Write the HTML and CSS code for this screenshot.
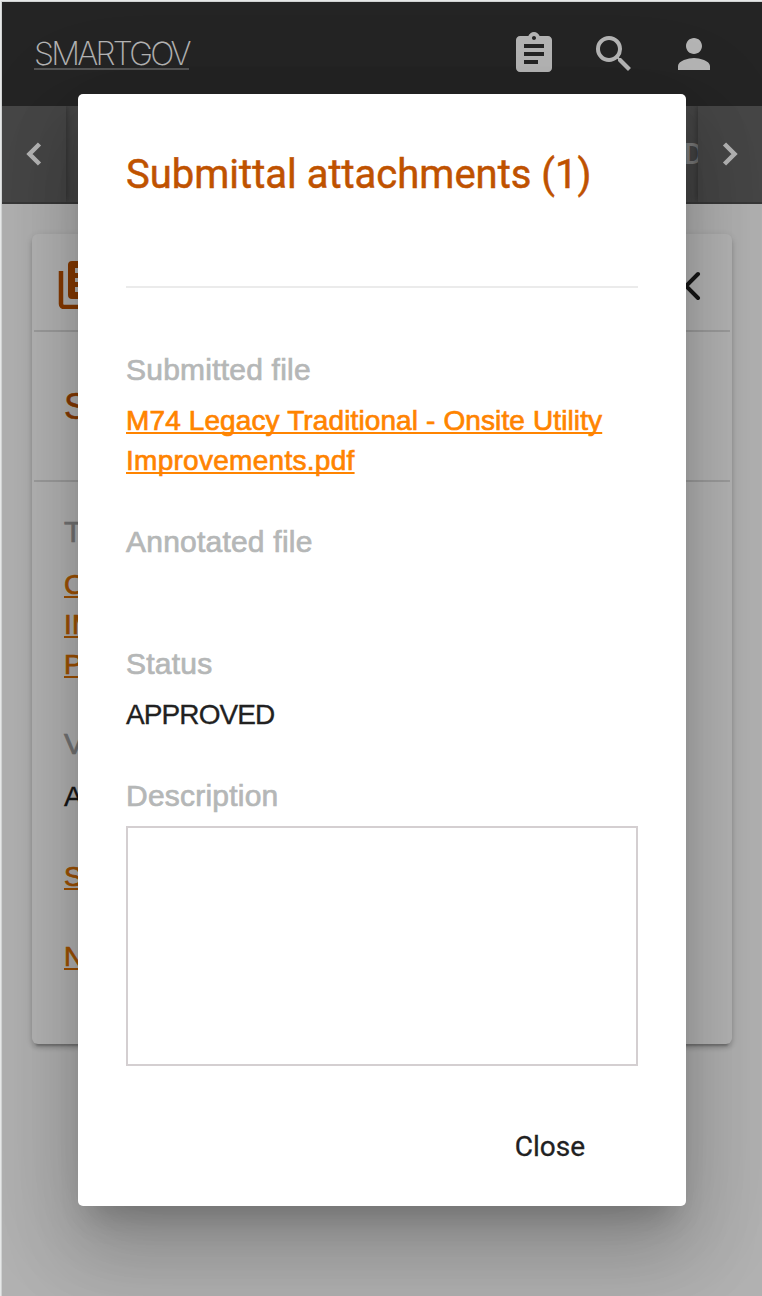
FILE: index.html
```html
<!DOCTYPE html>
<html lang="en">
<head>
<meta charset="utf-8">
<title>SmartGov</title>
<link rel="stylesheet" href="styles.css">
</head>
<body>
<div class="frame">
  <div class="page">
    <header class="topbar">
      <a class="brand">SMARTGOV</a>
      <div class="actions">
        <svg class="icon" viewBox="0 0 24 24"><path d="M19 3h-4.18C14.4 1.84 13.3 1 12 1s-2.4.84-2.82 2H5c-1.1 0-2 .9-2 2v14c0 1.1.9 2 2 2h14c1.1 0 2-.9 2-2V5c0-1.1-.9-2-2-2zm-7 0c.55 0 1 .45 1 1s-.45 1-1 1-1-.45-1-1 .45-1 1-1zm2 14H7v-2h7v2zm3-4H7v-2h10v2zm0-4H7V7h10v2z"/></svg>
        <svg class="icon" viewBox="0 0 24 24"><path d="M15.5 14h-.79l-.28-.27A6.471 6.471 0 0 0 16 9.5 6.500 6.500 0 1 0 9.500 16c1.610 0 3.090-.59 4.230-1.570l.27.28v.79l5 4.990L20.490 19l-4.990-5zm-6 0C7.010 14 5 11.990 5 9.500S7.010 5 9.500 5 14 7.010 14 9.500 11.990 14 9.500 14z"/></svg>
        <svg class="icon" viewBox="0 0 24 24"><path d="M12 12c2.210 0 4-1.790 4-4s-1.790-4-4-4-4 1.790-4 4 1.790 4 4 4zm0 2c-2.670 0-8 1.340-8 4v2h16v-2c0-2.660-5.330-4-8-4z"/></svg>
      </div>
    </header>
    <nav class="tabs">
      <div class="pager"><svg class="chev" viewBox="0 0 16 24"><path d="M13.500 2 3.500 12l10 10"/></svg></div>
      <div class="tab-list"><span class="tab">D</span></div>
      <div class="pager"><svg class="chev" viewBox="0 0 16 24"><path d="M2.500 2l10 10L2.500 22"/></svg></div>
    </nav>
    <main class="content">
      <section class="card">
        <div class="card-head">
          <svg class="library" viewBox="0 0 48 48"><path class="line" d="M3 10v33a3 3 0 0 0 3 3h33"/><path d="M14 0h30a4 4 0 0 1 4 4v30a4 4 0 0 1-4 4H14a4 4 0 0 1-4-4V4a4 4 0 0 1 4-4zm3 7v5h24V7zm0 10v4h24v-4zm0 9v5h14v-5z"/></svg>
          <svg class="collapse" viewBox="0 0 18 30"><path d="M14 3 2 15l12 12"/></svg>
        </div>
        <div class="card-title">S</div>
        <div class="card-body">
          <div class="label">T</div>
          <a class="link">C<br>IM<br>P</a>
          <div class="label gap">V</div>
          <div class="value">A</div>
          <a class="link row">S</a>
          <a class="link row">N</a>
        </div>
      </section>
    </main>
  </div>
  <div class="overlay">
    <div class="dialog">
      <h1 class="dialog-title">Submittal attachments (1)</h1>
      <div class="field">
        <div class="label">Submitted file</div>
        <a class="link">M74 Legacy Traditional - Onsite Utility <span class="wide">Improvements.pdf</span></a>
      </div>
      <div class="field annotated"><div class="label">Annotated file</div></div>
      <div class="field status">
        <div class="label">Status</div>
        <div class="value">APPROVED</div>
      </div>
      <div class="field">
        <div class="label">Description</div>
        <div class="textarea"></div>
      </div>
      <div class="dialog-actions"><a class="close">Close</a></div>
    </div>
  </div>
</div>
</body>
</html>
```

FILE: styles.css
```css
* { box-sizing: border-box; }
body { margin: 0; font-family: "Liberation Sans", Arial, sans-serif; }
.frame {
  position: relative;
  width: 762px;
  height: 1296px;
  overflow: hidden;
  padding: 2px 0 0 2px;
  background: linear-gradient(#d0d2d2, #d0d2d2) 1px 1px no-repeat, #e6e8e8;
}
.page { height: 1294px; background: #fafafa; }
.topbar {
  display: flex;
  align-items: center;
  justify-content: space-between;
  height: 104px;
  padding: 0 44px 0 32px;
  background: #333;
}
.brand {
  height: 32px;
  padding-top: 0;
  font: 200 32px/32px Inter, sans-serif;
  letter-spacing: -2.700px;
  color: #fff;
  border-bottom: 2px solid #777;
}
.actions { display: flex; gap: 32px; }
.icon { width: 48px; height: 48px; fill: #fff; }
.tabs {
  display: flex;
  height: 98px;
  overflow: hidden;
  background: #636363;
  border-bottom: 2px solid #505050;
}
.pager {
  display: flex;
  align-items: center;
  justify-content: center;
  width: 64px;
  box-shadow: 0 0 8px rgba(0,0,0,.4);
}
.chev { width: 16px; height: 24px; fill: none; stroke: #fff; stroke-width: 4.500; }
.tab-list { flex: 1; display: flex; align-items: center; justify-content: flex-end; overflow: hidden; }
.tab { margin-right: -5px; font: 500 29px Roboto, sans-serif; color: #b0b0b0; }
.content { padding: 30px; }
.card {
  height: 810px;
  padding: 0 2px;
  background: #fff;
  border-radius: 6px;
  box-shadow: 0 6px 2px -4px rgba(0,0,0,.2), 0 4px 4px rgba(0,0,0,.14), 0 2px 10px rgba(0,0,0,.12);
}
.card-head {
  display: flex;
  justify-content: space-between;
  height: 98px;
  padding: 27px 28px 0 24px;
  border-bottom: 2px solid #dedede;
}
.library { width: 48px; height: 48px; fill: #bf5200; }
.library .line { fill: none; stroke: #bf5200; stroke-width: 4.500; }
.collapse { width: 18px; height: 30px; margin-top: 10px; fill: none; stroke: #212121; stroke-width: 4; stroke-linecap: round; }
.card-title {
  height: 150px;
  padding: 55px 30px 0;
  border-bottom: 2px solid #dedede;
  font-size: 36px;
  line-height: 40px;
  color: #bf5200;
  -webkit-text-stroke: .5px;
}
.card-body { padding: 30px; }
.label { height: 40px; font-size: 30px; line-height: 44px; letter-spacing: .22px; color: #b5b7b7; -webkit-text-stroke: .7px; }
.card-body .label { line-height: 40px; color: #a5a5a5; }
.card-body .gap { margin-top: 40px; }
.link {
  display: block;
  padding-top: 1px;
  margin: 12px 0 -1px;
  font-size: 28px;
  line-height: 40px;
  letter-spacing: .12px;
  color: #ff8400;
  -webkit-text-stroke: .7px;
  text-decoration: underline;
  text-decoration-thickness: 2px;
  text-underline-offset: 2px;
  text-decoration-skip-ink: none;
}
.wide { letter-spacing: .28px; }
.card-body .link { color: #e37400; }
.value { padding-top: 1px; margin: 12px 0 -1px; font-size: 28px; line-height: 40px; letter-spacing: -.9px; color: #212121; -webkit-text-stroke: .3px; }
.card-body .row { margin-top: 40px; }
.overlay {
  position: absolute;
  inset: 2px 0 0 2px;
  display: flex;
  align-items: flex-start;
  justify-content: center;
  padding-top: 92px;
  background: rgba(0,0,0,.29);
  overflow: hidden;
}
.dialog {
  width: 608px;
  height: 1112px;
  padding: 48px;
  background: #fff;
  border-radius: 5px;
  box-shadow: 0 22px 30px -14px rgba(0,0,0,.2), 0 48px 76px 6px rgba(0,0,0,.14), 0 18px 92px 16px rgba(0,0,0,.12);
}
.dialog-title {
  height: 146px;
  margin: 0 0 60px;
  border-bottom: 2px solid #ebebeb;
  font: 400 40px/66px Roboto, sans-serif;
  color: #bf5200;
  -webkit-text-stroke: .5px;
}
.field { margin-bottom: 40px; }
.annotated { height: 82px; }
.textarea { height: 240px; margin-top: 12px; border: 2px solid #d4cfd1; }
.dialog-actions { display: flex; justify-content: flex-end; padding: 21px 53px 0 0; }
.close { font: 400 28px/40px Roboto, sans-serif; color: #212121; -webkit-text-stroke: .3px; }
```
